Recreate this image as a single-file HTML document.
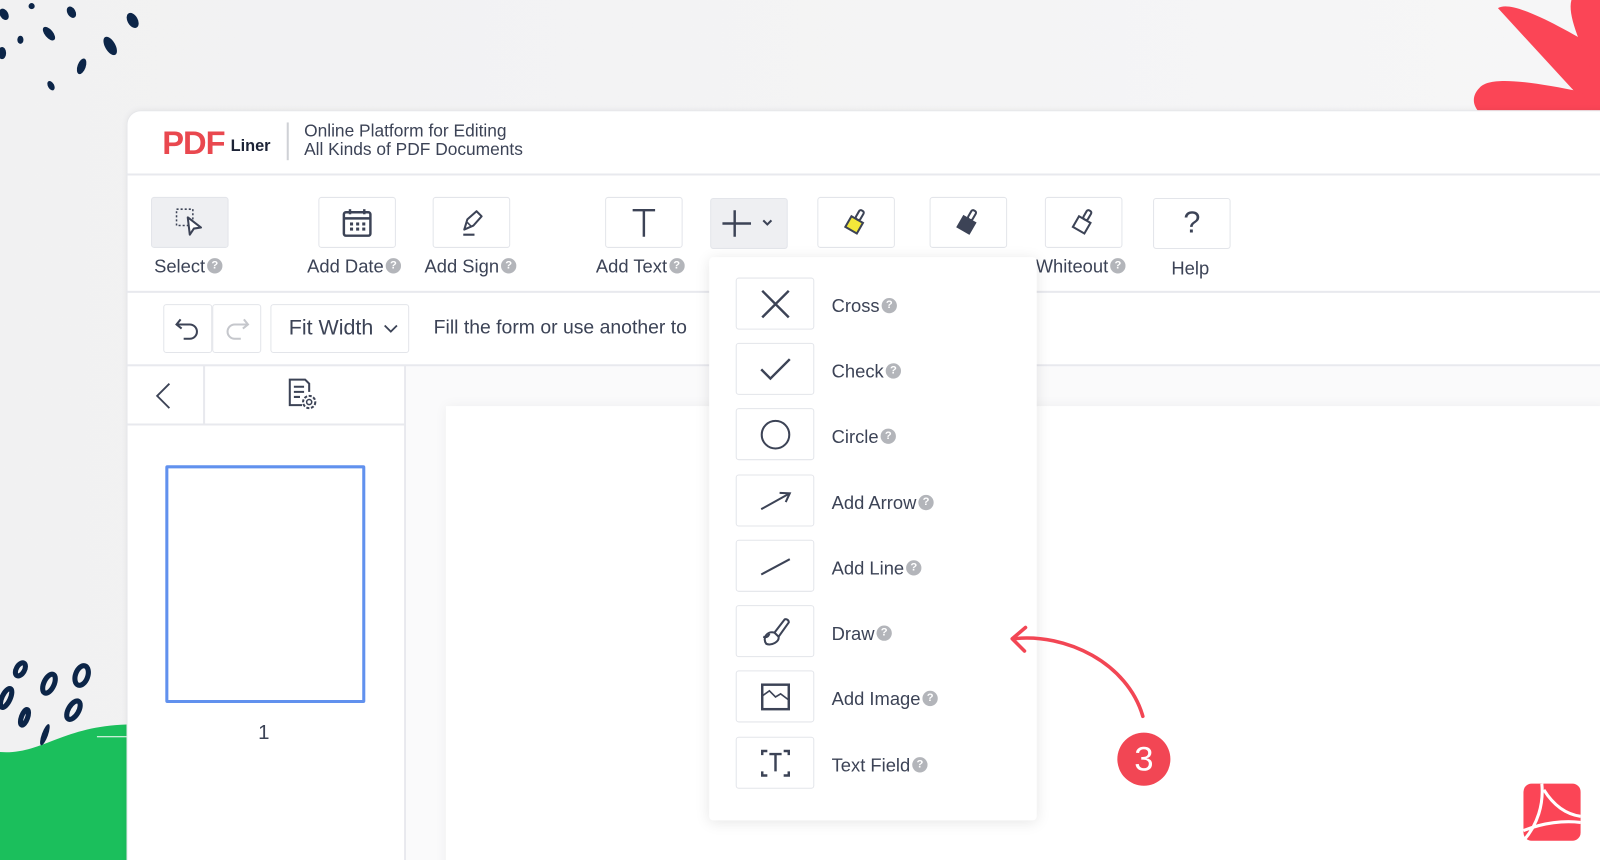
<!DOCTYPE html>
<html><head><meta charset="utf-8"><style>
*{box-sizing:border-box;margin:0;padding:0}
html,body{width:1600px;height:860px;overflow:hidden}
body{background:linear-gradient(90deg,#f1f1f2,#f6f6f7);font-family:"Liberation Sans",sans-serif;color:#3c4356;position:relative}
#w{position:absolute;left:0;top:0;width:1568px;height:843px;transform:scale(1.0204);transform-origin:0 0}
.abs{position:absolute}
.panel{left:124px;top:108px;width:1460px;height:760px;background:#fff;border-top-left-radius:14px;box-shadow:0 0 6px rgba(0,0,0,.06);border:1px solid #e6e7ea}
.hline{position:absolute;height:2px;background:#e8e9ee}
.btn{position:absolute;width:76px;height:50px;border:1.5px solid #e3e5ea;border-radius:3px;background:#fff;display:flex;align-items:center;justify-content:center}
.btn.g{background:#eeeff2}
.lbl{position:absolute;font-size:18px;color:#3c4356;white-space:nowrap}
.q{display:inline-block;width:15px;height:15px;border-radius:50%;background:#b3b5ba;color:#fff;font-size:11px;font-weight:bold;text-align:center;line-height:15px;vertical-align:middle;margin-left:2px;margin-top:-3px}
svg{overflow:visible}
.mi{position:absolute;left:721px;width:77px;height:51px;border:1.5px solid #e3e5ea;border-radius:3px;display:flex;align-items:center;justify-content:center;background:#fff}
.ml{position:absolute;left:815px;font-size:18px;color:#3c4356;white-space:nowrap}
</style></head><body><div id="w">
<svg class="abs" style="left:0;top:0" width="150" height="95">
<g fill="#0c2548">
<ellipse cx="4" cy="14" rx="4" ry="6" transform="rotate(-30 4 14)"/>
<ellipse cx="31" cy="6" rx="3" ry="3"/>
<ellipse cx="70" cy="12" rx="4" ry="6" transform="rotate(-30 70 12)"/>
<ellipse cx="130" cy="20" rx="5" ry="8" transform="rotate(-30 130 20)"/>
<ellipse cx="48" cy="33" rx="4" ry="8" transform="rotate(-40 48 33)"/>
<ellipse cx="20" cy="39" rx="3" ry="4"/>
<ellipse cx="108" cy="45" rx="5" ry="10" transform="rotate(-30 108 45)"/>
<ellipse cx="2" cy="52" rx="4" ry="6"/>
<ellipse cx="80" cy="65" rx="4" ry="8" transform="rotate(20 80 65)"/>
<ellipse cx="50" cy="84" rx="3" ry="5" transform="rotate(-30 50 84)"/>
</g></svg>
<svg class="abs" style="left:1440px;top:0" width="130" height="108">
<g fill="#fb4556">
<path d="M28 8 C40 0 80 20 130 50 L130 108 L120 108 Z"/>
<path d="M10 86 C20 74 60 80 110 90 L120 108 L8 108 C2 100 4 92 10 86Z"/>
<path d="M100 0 L130 0 L130 80 L120 70 C108 40 96 15 100 0Z"/>
</g></svg>
<svg class="abs" style="left:0;top:640px" width="124" height="220">
<path d="M0 97 C40 100 60 72 124 70 L124 220 L0 220Z" fill="#1bbf5c"/>
<path d="M95 82 L124 82" stroke="#fff" stroke-width="1"/>
<g fill="none" stroke="#0c2548" stroke-width="5">
<ellipse cx="20" cy="16" rx="4" ry="7" transform="rotate(30 20 16)"/>
<ellipse cx="6" cy="44" rx="4" ry="10" transform="rotate(25 6 44)"/>
<ellipse cx="48" cy="30" rx="5" ry="10" transform="rotate(25 48 30)"/>
<ellipse cx="80" cy="22" rx="6" ry="10" transform="rotate(20 80 22)"/>
<ellipse cx="24" cy="63" rx="3" ry="8" transform="rotate(20 24 63)"/>
<ellipse cx="72" cy="56" rx="5" ry="10" transform="rotate(30 72 56)"/>
</g>
<ellipse cx="44" cy="80" rx="3" ry="11" transform="rotate(20 44 80)" fill="#0c2548"/>
</svg>

<div class="abs panel"></div>
<div class="abs" style="left:159px;top:122px;font-size:32px;font-weight:bold;color:#e9484f;letter-spacing:-1px">PDF</div>
<div class="abs" style="left:226px;top:135px;font-size:16px;font-weight:bold;color:#1c2336">Liner</div>
<div class="abs" style="left:281px;top:120px;width:2px;height:37px;background:#cfd1d6"></div>
<div class="abs" style="left:298px;top:120px;font-size:17px;line-height:18px;color:#3c4356">Online Platform for Editing<br>All Kinds of PDF Documents</div>
<div class="hline" style="left:124px;top:170px;width:1450px"></div>
<div class="btn g" style="left:148px;top:193px"><svg width="30" height="30"><rect x="2" y="2" width="16" height="16" fill="none" stroke="#3c4356" stroke-width="1.5" stroke-dasharray="2 2"/><path d="M13 10 L26 20 L19 21 L15 27 Z" fill="#fff" stroke="#3c4356" stroke-width="2" stroke-linejoin="round"/></svg></div>
<div class="lbl" style="left:151px;top:251px">Select<span class="q">?</span></div>
<div class="btn" style="left:312px;top:193px"><svg width="30" height="30"><rect x="2" y="5" width="26" height="23" rx="2" fill="none" stroke="#3c4356" stroke-width="2.4"/><line x1="2" y1="11" x2="28" y2="11" stroke="#3c4356" stroke-width="2.4"/><line x1="8" y1="2" x2="8" y2="7" stroke="#3c4356" stroke-width="2.4"/><line x1="22" y1="2" x2="22" y2="7" stroke="#3c4356" stroke-width="2.4"/><g fill="#3c4356"><rect x="8" y="15" width="3" height="3"/><rect x="14" y="15" width="3" height="3"/><rect x="20" y="15" width="3" height="3"/><rect x="8" y="20" width="3" height="3"/><rect x="14" y="20" width="3" height="3"/><rect x="20" y="20" width="3" height="3"/></g></svg></div>
<div class="lbl" style="left:301px;top:251px">Add Date<span class="q">?</span></div>
<div class="btn" style="left:424px;top:193px"><svg width="30" height="30"><path d="M8 22 L11 12 L20 4 L25 9 L17 18 Z M7 27 L18 27" fill="none" stroke="#3c4356" stroke-width="2" stroke-linejoin="round"/><line x1="11" y1="15" x2="15" y2="19" stroke="#3c4356" stroke-width="1.5"/></svg></div>
<div class="lbl" style="left:416px;top:251px">Add Sign<span class="q">?</span></div>
<div class="btn" style="left:593px;top:193px"><svg width="30" height="30"><path d="M4 3 L26 3 M15 3 L15 29" stroke="#3c4356" stroke-width="2.4" fill="none"/></svg></div>
<div class="lbl" style="left:584px;top:251px">Add Text<span class="q">?</span></div>
<div class="btn g" style="left:696px;top:194px"><svg width="52" height="30"><path d="M12 2 L12 28 M0 15 L28 15" stroke="#3c4356" stroke-width="2.4"/><path d="M40 12 L44 16 L48 12" stroke="#3c4356" stroke-width="2" fill="none"/></svg></div>
<div class="btn" style="left:801px;top:193px"><svg width="30" height="30"><g transform="rotate(30 15 15)"><rect x="8" y="12" width="13" height="12" fill="#f3e83a" stroke="#3c4356" stroke-width="2"/><rect x="12" y="2" width="5" height="10" rx="2" fill="none" stroke="#3c4356" stroke-width="2"/></g></svg></div>
<div class="btn" style="left:911px;top:193px"><svg width="30" height="30"><g transform="rotate(30 15 15)"><rect x="8" y="12" width="13" height="12" fill="#3c4356" stroke="#3c4356" stroke-width="2"/><rect x="12" y="2" width="5" height="10" rx="2" fill="none" stroke="#3c4356" stroke-width="2"/></g></svg></div>
<div class="btn" style="left:1024px;top:193px"><svg width="30" height="30"><g transform="rotate(30 15 15)"><rect x="8" y="12" width="13" height="12" fill="#fff" stroke="#3c4356" stroke-width="2"/><rect x="12" y="2" width="5" height="10" rx="2" fill="none" stroke="#3c4356" stroke-width="2"/></g></svg></div>
<div class="lbl" style="left:1015px;top:251px">Whiteout<span class="q">?</span></div>
<div class="btn" style="left:1130px;top:194px"><span style="font-size:30px;color:#3c4356">?</span></div>
<div class="lbl" style="left:1148px;top:253px">Help</div>
<div class="hline" style="left:124px;top:285px;width:1450px"></div>
<div class="btn" style="left:160px;top:298px;width:48px;height:48px"><svg width="26" height="26"><path d="M6 4 L2 9 L7 13 M2 9 L15 9 A7 7 0 0 1 15 23 L9 23" fill="none" stroke="#3c4356" stroke-width="2"/></svg></div>
<div class="btn" style="left:208px;top:298px;width:48px;height:48px"><svg width="26" height="26"><path d="M20 4 L24 9 L19 13 M24 9 L11 9 A7 7 0 0 0 11 23 L17 23" fill="none" stroke="#c5c7cc" stroke-width="2"/></svg></div>
<div class="btn" style="left:265px;top:298px;width:136px;height:48px;justify-content:flex-start;padding-left:17px"><span style="font-size:21px">Fit Width</span><svg width="14" height="10" style="margin-left:10px"><path d="M1 2 L7 8 L13 2" stroke="#3c4356" stroke-width="1.8" fill="none"/></svg></div>
<div class="lbl" style="left:425px;top:311px;font-size:19px">Fill the form or use another to</div>
<div class="hline" style="left:124px;top:357px;width:1450px"></div>
<div class="abs" style="left:396px;top:358px;width:2px;height:502px;background:#e8e9ee"></div>
<div class="abs" style="left:199px;top:358px;width:2px;height:58px;background:#e8e9ee"></div>
<div class="hline" style="left:124px;top:415px;width:273px"></div>
<svg class="abs" style="left:150px;top:374px" width="20" height="28"><path d="M16 2 L4 14 L16 26" stroke="#3c4356" stroke-width="1.8" fill="none"/></svg>
<svg class="abs" style="left:281px;top:370px" width="34" height="36"><path d="M15 27 L3 27 L3 2 L18 2 L22 6 L22 14" fill="none" stroke="#3c4356" stroke-width="2"/><path d="M7 9 L17 9 M7 14 L17 14 M7 19 L13 19" stroke="#3c4356" stroke-width="2"/><circle cx="22" cy="24" r="6" fill="#fff" stroke="#3c4356" stroke-width="2" stroke-dasharray="3 1.6"/><circle cx="22" cy="24" r="2.5" fill="none" stroke="#3c4356" stroke-width="1.5"/></svg>
<div class="abs" style="left:162px;top:456px;width:196px;height:233px;border:3px solid #6191ee;border-radius:2px;background:#fff"></div>
<div class="lbl" style="left:253px;top:707px;font-size:20px">1</div>
<div class="abs" style="left:398px;top:359px;width:1170px;height:501px;background:#fafafb"></div>
<div class="abs" style="left:437px;top:398px;width:1140px;height:470px;background:#fff;box-shadow:0 0 12px rgba(0,0,0,.05)"></div>
<div class="abs" style="left:695px;top:252px;width:321px;height:552px;background:#fff;border-radius:4px;box-shadow:0 2px 14px rgba(0,0,0,.1)"></div>
<div class="mi" style="top:272px"><svg width="30" height="30"><path d="M2 2 L28 28 M28 2 L2 28" stroke="#3c4356" stroke-width="2.4"/></svg></div>
<div class="ml" style="top:290px">Cross<span class="q">?</span></div>
<div class="mi" style="top:336px"><svg width="30" height="24"><path d="M1 12 L10 21 L29 2" stroke="#3c4356" stroke-width="2.4" fill="none"/></svg></div>
<div class="ml" style="top:354px">Check<span class="q">?</span></div>
<div class="mi" style="top:400px"><svg width="30" height="30"><circle cx="15" cy="15" r="13.5" stroke="#3c4356" stroke-width="2" fill="none"/></svg></div>
<div class="ml" style="top:418px">Circle<span class="q">?</span></div>
<div class="mi" style="top:465px"><svg width="30" height="20"><path d="M1 18 L28 3 M19 2 L29 2.5 L25 11" stroke="#3c4356" stroke-width="2" fill="none"/></svg></div>
<div class="ml" style="top:483px">Add Arrow<span class="q">?</span></div>
<div class="mi" style="top:529px"><svg width="30" height="20"><path d="M1 18 L29 3" stroke="#3c4356" stroke-width="2" fill="none"/></svg></div>
<div class="ml" style="top:547px">Add Line<span class="q">?</span></div>
<div class="mi" style="top:593px"><svg width="30" height="30"><path d="M14 16 L24 3 A3 3 0 0 1 28 6 L18 20 Z" fill="none" stroke="#3c4356" stroke-width="2"/><path d="M14 16 C6 14 2 22 6 27 C11 29 19 25 18 20" fill="none" stroke="#3c4356" stroke-width="2"/><path d="M3 20 C6 21 8 20 9 17" stroke="#3c4356" stroke-width="2" fill="none"/></svg></div>
<div class="ml" style="top:611px">Draw<span class="q">?</span></div>
<div class="mi" style="top:657px"><svg width="30" height="30"><rect x="2" y="3" width="26" height="24" fill="none" stroke="#3c4356" stroke-width="2.4"/><path d="M2 14 L9 9 L15 15 L20 12 L28 18" fill="none" stroke="#3c4356" stroke-width="1.6"/></svg></div>
<div class="ml" style="top:675px">Add Image<span class="q">?</span></div>
<div class="mi" style="top:722px"><svg width="30" height="30"><path d="M2 7 L2 3 L7 3 M23 3 L28 3 L28 7 M2 23 L2 27 L7 27 M23 27 L28 27 L28 23 M9 6 L21 6 M15 6 L15 23" stroke="#3c4356" stroke-width="2.4" fill="none"/></svg></div>
<div class="ml" style="top:740px">Text Field<span class="q">?</span></div>
<svg class="abs" style="left:985px;top:610px" width="150" height="110"><path d="M8 16 C60 10 120 40 135 92" stroke="#f24654" stroke-width="3.5" fill="none" stroke-linecap="round"/><path d="M20 5 L7 16 L19 28" stroke="#f24654" stroke-width="3.5" fill="none" stroke-linecap="round" stroke-linejoin="round"/></svg>
<div class="abs" style="left:1095px;top:718px;width:52px;height:52px;border-radius:50%;background:#f24654;color:#fff;font-size:34px;text-align:center;line-height:52px">3</div>
<svg class="abs" style="left:1493px;top:768px" width="56" height="56"><rect width="56" height="56" rx="8" fill="#fb4556"/><path d="M18 0 C20 20 14 40 0 56 M20 6 C30 22 42 30 56 32 M0 46 C20 38 40 36 56 38" stroke="#fff" stroke-width="3" fill="none"/></svg>
</div></body></html>
